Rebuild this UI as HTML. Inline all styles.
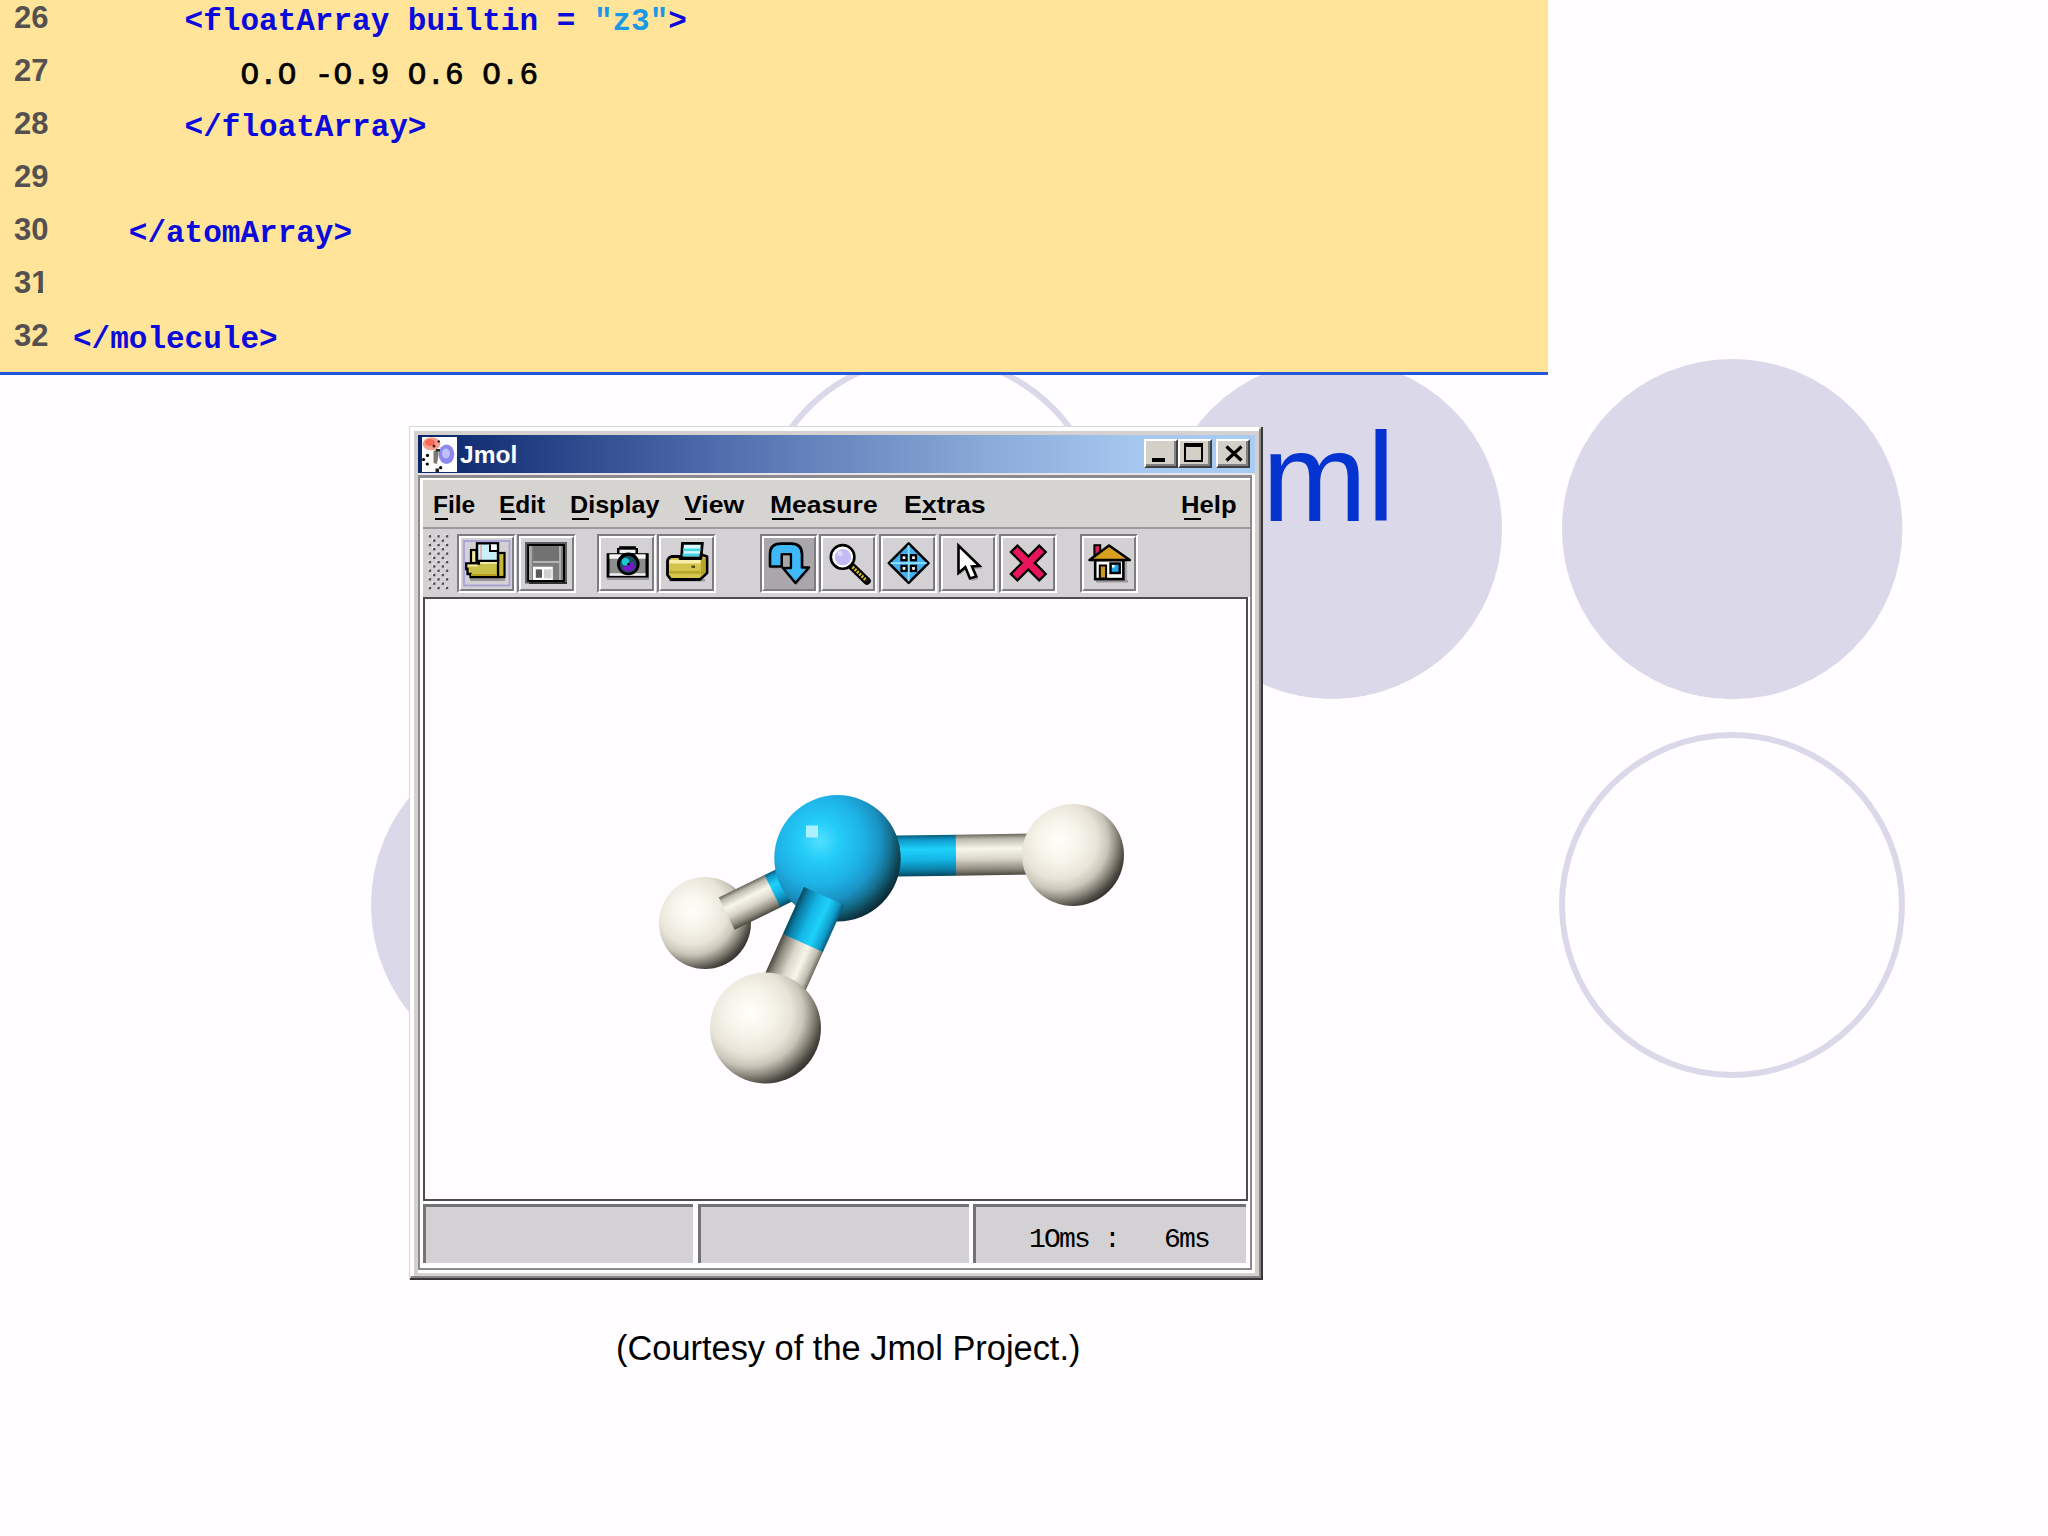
<!DOCTYPE html>
<html><head><meta charset="utf-8">
<style>
html,body{margin:0;padding:0;}
body{width:2048px;height:1536px;position:relative;overflow:hidden;background:#FFFDFF;font-family:"Liberation Sans",sans-serif;}
.abs{position:absolute;}
#bg{position:absolute;left:0;top:0;}
#code{position:absolute;left:0;top:0;width:1548px;height:372px;background:#FFE49A;}
#codeline{position:absolute;left:0;top:372px;width:1548px;height:3px;background:#2456DC;}
.ln{position:absolute;left:14px;margin-top:2px;font-family:"Liberation Sans",sans-serif;font-weight:bold;font-size:31px;color:#555050;line-height:1;}
.cd{position:absolute;font-family:"Liberation Mono",monospace;font-weight:bold;font-size:31px;color:#0A0ADC;line-height:1;white-space:pre;}
.title{position:absolute;left:1262px;top:415px;font-size:126px;color:#0433D0;line-height:1;}
.caption{position:absolute;left:616px;top:1331px;font-size:34.4px;color:#000;line-height:1;white-space:pre;}
</style></head>
<body>
<svg id="bg" width="2048" height="1536" viewBox="0 0 2048 1536">
  <circle cx="930.5" cy="529" r="172" fill="none" stroke="#DBD8EA" stroke-width="6"/>
  <circle cx="1332" cy="529" r="170" fill="#DBD8EA"/>
  <circle cx="1732.2" cy="529.1" r="170.2" fill="#DBD8EA"/>
  <circle cx="541" cy="905" r="170" fill="#DBD8EA"/>
  <circle cx="1732" cy="905" r="170" fill="none" stroke="#DBD8EA" stroke-width="6"/>
</svg>
<div class="title">ml</div>

<div id="code"></div>
<div id="codeline"></div>
<div class="ln" style="top:0px">26</div>
<div class="ln" style="top:53px">27</div>
<div class="ln" style="top:106px">28</div>
<div class="ln" style="top:159px">29</div>
<div class="ln" style="top:212px">30</div>
<div class="ln" style="top:265px">31</div>
<div class="abs" style="left:33px;top:288px;width:5.4px;height:6px;background:#FFE49A"></div><div class="abs" style="left:42.9px;top:288px;width:6px;height:6px;background:#FFE49A"></div>
<div class="ln" style="top:318px">32</div>
<div class="cd" style="left:73px;top:6px">      &lt;floatArray builtin = <span style="color:#1A98E8">"z3"</span>&gt;</div>
<div class="cd" style="left:73px;top:60px;color:#000;font-weight:normal;-webkit-text-stroke:0.7px #000">         O.O -O.9 O.6 O.6</div>
<div class="cd" style="left:73px;top:112px">      &lt;/floatArray&gt;</div>
<div class="cd" style="left:73px;top:218px">   &lt;/atomArray&gt;</div>
<div class="cd" style="left:73px;top:324px">&lt;/molecule&gt;</div>

<div class="caption">(Courtesy of the Jmol Project.)</div>


<!-- JMOL WINDOW -->
<div class="abs" style="left:409px;top:426px;width:854px;height:854px;background:#D4D1CE;"></div>
<div class="abs" style="left:410px;top:427px;width:4px;height:849px;background:#FFFFFF;"></div>
<div class="abs" style="left:410px;top:427px;width:849px;height:4px;background:#FFFFFF;"></div>
<div class="abs" style="left:409px;top:426px;width:1px;height:854px;background:#D8D8D8;"></div>
<div class="abs" style="left:409px;top:426px;width:854px;height:1px;background:#D8D8D8;"></div>
<div class="abs" style="left:1259px;top:429px;width:2px;height:849px;background:#858585;"></div>
<div class="abs" style="left:1261px;top:427px;width:2px;height:853px;background:#38363C;"></div>
<div class="abs" style="left:411px;top:1276px;width:850px;height:2px;background:#858585;"></div>
<div class="abs" style="left:410px;top:1278px;width:853px;height:2px;background:#38363C;"></div>
<!-- title bar -->
<div class="abs" style="left:418px;top:435px;width:837px;height:38px;background:linear-gradient(to right,#0A246A 0%,#1F3C80 12%,#4A68A8 33%,#6A88C0 50%,#8AAAD8 68%,#A6C8F0 86%,#A8CCF4 100%);"></div>
<div class="abs" style="left:418px;top:473px;width:837px;height:2px;background:#E6E4E6;"></div>
<!-- content pane etched border -->
<div class="abs" style="left:418px;top:475px;width:837px;height:798px;background:#FFFFFF;"></div>
<div class="abs" style="left:418px;top:475px;width:834px;height:795px;background:#8C8A8E;"></div>
<div class="abs" style="left:420px;top:478px;width:830px;height:790px;background:#FFFFFF;"></div>
<div class="abs" style="left:423px;top:480px;width:827px;height:784px;background:#D4D1D4;"></div>
<div class="abs" style="left:423px;top:480px;width:827px;height:47px;background:#D6D4D1;"></div>
<!-- menu separator -->
<div class="abs" style="left:423px;top:527px;width:827px;height:2px;background:#9C9A9E;"></div>
<!-- display -->
<div class="abs" style="left:423px;top:597px;width:827px;height:607px;background:#FFFFFF;"></div>
<div class="abs" style="left:423px;top:597px;width:821px;height:600px;background:#FFFDFF;border:2px solid #4E4C50;"></div>

<!-- molecule -->
<svg class="abs" style="left:600px;top:770px" width="560" height="340" viewBox="600 770 560 340">
  <defs>
    <radialGradient id="gN" cx="0.36" cy="0.36" r="0.72">
      <stop offset="0" stop-color="#50E0FF"/>
      <stop offset="0.22" stop-color="#24CCF8"/>
      <stop offset="0.48" stop-color="#1EB2E6"/>
      <stop offset="0.66" stop-color="#1A94C6"/>
      <stop offset="0.78" stop-color="#15708F"/>
      <stop offset="0.89" stop-color="#0E4252"/>
      <stop offset="1" stop-color="#081C24"/>
    </radialGradient>
    <radialGradient id="gH" cx="0.36" cy="0.36" r="0.72">
      <stop offset="0" stop-color="#FFFFFA"/>
      <stop offset="0.3" stop-color="#F6F3EA"/>
      <stop offset="0.52" stop-color="#E8E4D8"/>
      <stop offset="0.67" stop-color="#CAC6BA"/>
      <stop offset="0.79" stop-color="#8C887E"/>
      <stop offset="0.9" stop-color="#4C4A42"/>
      <stop offset="1" stop-color="#262420"/>
    </radialGradient>
    <linearGradient id="bW" x1="0" y1="0" x2="0" y2="1">
      <stop offset="0" stop-color="#6A685E"/>
      <stop offset="0.12" stop-color="#BEBCB0"/>
      <stop offset="0.35" stop-color="#F8F6EC"/>
      <stop offset="0.6" stop-color="#DAD6CA"/>
      <stop offset="0.85" stop-color="#8E8A7E"/>
      <stop offset="1" stop-color="#4A4840"/>
    </linearGradient>
    <linearGradient id="bB" x1="0" y1="0" x2="0" y2="1">
      <stop offset="0" stop-color="#0A5A78"/>
      <stop offset="0.12" stop-color="#109CCC"/>
      <stop offset="0.35" stop-color="#1ED2FA"/>
      <stop offset="0.6" stop-color="#14B6E6"/>
      <stop offset="0.85" stop-color="#0A7EA6"/>
      <stop offset="1" stop-color="#06485E"/>
    </linearGradient>
  </defs>
  <!-- H left -->
  <circle cx="705" cy="923" r="46" fill="url(#gH)"/>
  <!-- left bond: from (726.7,913.7) toward N, angle -26.2deg -->
  <g transform="translate(726.7 913.7) rotate(-26.2)">
    <rect x="0" y="-18" width="52" height="36" fill="url(#bW)"/>
    <rect x="51" y="-18" width="70" height="36" fill="url(#bB)"/>
  </g>
  <!-- right bond -->
  <g transform="translate(860 856.5) rotate(-0.8)">
    <rect x="0" y="-20.5" width="96.5" height="41" fill="url(#bB)"/>
    <rect x="96" y="-20.5" width="80" height="41" fill="url(#bW)"/>
  </g>
  <!-- N -->
  <circle cx="837.5" cy="858.3" r="63.2" fill="url(#gN)"/>
  <rect x="806" y="825.5" width="12" height="12" fill="#B8F4FF" opacity="0.9"/>
  <!-- bottom bond: from cap (824,896) toward H-bottom, angle: direction (-0.41,0.912) -->
  <g transform="translate(824 896) rotate(114.2)">
    <rect x="0" y="-22" width="52" height="44" fill="url(#bB)"/>
    <rect x="51.5" y="-22" width="70" height="44" fill="url(#bW)"/>
  </g>
  <!-- H right -->
  <circle cx="1073" cy="855" r="51" fill="url(#gH)"/>
  <!-- H bottom -->
  <circle cx="765.5" cy="1028" r="55.5" fill="url(#gH)"/>
</svg>

<!-- menu -->
<style>
.mn{position:absolute;top:493px;font-family:"Liberation Sans",sans-serif;font-weight:bold;font-size:24.5px;line-height:1;color:#000;white-space:pre;transform-origin:0 0;}
.ul{position:absolute;top:518px;height:2px;background:#000;}
</style>
<div class="mn" style="left:433px;">File</div>
<div class="mn" style="left:499px;">Edit</div>
<div class="mn" style="left:569.5px;transform:scaleX(1.026)">Display</div>
<div class="mn" style="left:683.5px;transform:scaleX(1.087)">View</div>
<div class="mn" style="left:770px;transform:scaleX(1.083)">Measure</div>
<div class="mn" style="left:903.5px;transform:scaleX(1.089)">Extras</div>
<div class="mn" style="left:1181.3px;transform:scaleX(1.046)">Help</div>
<div class="ul" style="left:435px;width:13px"></div>
<div class="ul" style="left:501px;width:15px"></div>
<div class="ul" style="left:572px;width:17px"></div>
<div class="ul" style="left:685px;width:16px"></div>
<div class="ul" style="left:772px;width:22px"></div>
<div class="ul" style="left:922px;width:14px"></div>
<div class="ul" style="left:1184px;width:17px"></div>
<!-- title text -->
<div class="abs" style="left:460px;top:443px;font-family:'Liberation Sans',sans-serif;font-weight:bold;font-size:24.5px;line-height:1;color:#FFFFFF;white-space:pre;">Jmol</div>
<!-- title bar icon -->
<svg class="abs" style="left:422px;top:437px" width="35" height="35" viewBox="0 0 35 35">
  <rect x="0" y="0" width="35" height="35" fill="#FFFFFF"/>
  <ellipse cx="9.5" cy="6.8" rx="9" ry="6.5" fill="#F4A090"/>
  <ellipse cx="8" cy="5.5" rx="5" ry="3.5" fill="#F86858"/>
  <ellipse cx="24.5" cy="17.2" rx="7.8" ry="9.8" fill="#8C88F0"/>
  <ellipse cx="24" cy="16.5" rx="4" ry="5" fill="#C0C0FF"/>
  <path d="M11.5 14 L16.5 12 L16.5 18 L15 27 L11.5 26 Z" fill="#7A7A70"/>
  <circle cx="5.5" cy="18.4" r="1.6" fill="#000"/>
  <circle cx="1.6" cy="22.5" r="1.6" fill="#000"/>
  <circle cx="5.3" cy="27" r="1.6" fill="#000"/>
  <circle cx="18.6" cy="30.7" r="1.6" fill="#000"/>
  <rect x="13.5" y="31.5" width="3.5" height="3.5" fill="#202020"/>
  <circle cx="12" cy="9" r="1.5" fill="#501818"/>
  <circle cx="16.7" cy="4.5" r="1.2" fill="#301010"/>
  <rect x="14" y="12" width="4" height="2.5" fill="#203020"/>
</svg>
<!-- title buttons -->
<style>
.tb{position:absolute;top:439px;width:34px;height:29px;box-sizing:border-box;background:#D4D0C8;border-top:2px solid #FFFFFF;border-left:2px solid #FFFFFF;border-right:2px solid #404040;border-bottom:2px solid #404040;}
.tbi{position:absolute;left:0;top:0;right:0;bottom:0;border-right:2px solid #808080;border-bottom:2px solid #808080;}
.btn{position:absolute;top:534px;width:59px;height:59px;box-sizing:border-box;border-top:2px solid #7E7C80;border-left:2px solid #7E7C80;border-right:2px solid #FFFFFF;border-bottom:2px solid #FFFFFF;}
.btni{position:absolute;left:0;top:0;right:0;bottom:0;border-top:2px solid #FFFFFF;border-left:2px solid #FFFFFF;border-right:2px solid #7E7C80;border-bottom:2px solid #7E7C80;}
.btn svg{position:absolute;left:-2px;top:-2px;}
</style>
<div class="tb" style="left:1144px"><div class="tbi"></div><div class="abs" style="left:6px;top:17px;width:13px;height:4px;background:#000"></div></div>
<div class="tb" style="left:1178px"><div class="tbi"></div><div class="abs" style="left:4px;top:2px;width:19px;height:19px;box-sizing:border-box;border:2px solid #000;border-top-width:4px;"></div></div>
<div class="tb" style="left:1216px;width:34px"><div class="tbi"></div>
 <svg class="abs" style="left:7px;top:4px" width="18" height="17" viewBox="0 0 18 17"><path d="M1.5 1.5 L16.5 15.5 M16.5 1.5 L1.5 15.5" stroke="#000" stroke-width="3.2"/></svg></div>

<!-- toolbar grip -->
<svg class="abs" style="left:426px;top:532px" width="24" height="62" viewBox="0 0 24 62"><rect x="2.0" y="2.5" width="2.2" height="2.2" fill="#FFFFFF"/><rect x="2.7" y="3.1" width="2.4" height="2.4" fill="#504E52"/><rect x="10.6" y="2.5" width="2.2" height="2.2" fill="#FFFFFF"/><rect x="11.3" y="3.1" width="2.4" height="2.4" fill="#504E52"/><rect x="19.1" y="2.5" width="2.2" height="2.2" fill="#FFFFFF"/><rect x="19.8" y="3.1" width="2.4" height="2.4" fill="#504E52"/><rect x="2.0" y="11.1" width="2.2" height="2.2" fill="#FFFFFF"/><rect x="2.7" y="11.8" width="2.4" height="2.4" fill="#504E52"/><rect x="10.6" y="11.1" width="2.2" height="2.2" fill="#FFFFFF"/><rect x="11.3" y="11.8" width="2.4" height="2.4" fill="#504E52"/><rect x="19.1" y="11.1" width="2.2" height="2.2" fill="#FFFFFF"/><rect x="19.8" y="11.8" width="2.4" height="2.4" fill="#504E52"/><rect x="2.0" y="19.7" width="2.2" height="2.2" fill="#FFFFFF"/><rect x="2.7" y="20.4" width="2.4" height="2.4" fill="#504E52"/><rect x="10.6" y="19.7" width="2.2" height="2.2" fill="#FFFFFF"/><rect x="11.3" y="20.4" width="2.4" height="2.4" fill="#504E52"/><rect x="19.1" y="19.7" width="2.2" height="2.2" fill="#FFFFFF"/><rect x="19.8" y="20.4" width="2.4" height="2.4" fill="#504E52"/><rect x="2.0" y="28.2" width="2.2" height="2.2" fill="#FFFFFF"/><rect x="2.7" y="28.9" width="2.4" height="2.4" fill="#504E52"/><rect x="10.6" y="28.2" width="2.2" height="2.2" fill="#FFFFFF"/><rect x="11.3" y="28.9" width="2.4" height="2.4" fill="#504E52"/><rect x="19.1" y="28.2" width="2.2" height="2.2" fill="#FFFFFF"/><rect x="19.8" y="28.9" width="2.4" height="2.4" fill="#504E52"/><rect x="2.0" y="36.8" width="2.2" height="2.2" fill="#FFFFFF"/><rect x="2.7" y="37.5" width="2.4" height="2.4" fill="#504E52"/><rect x="10.6" y="36.8" width="2.2" height="2.2" fill="#FFFFFF"/><rect x="11.3" y="37.5" width="2.4" height="2.4" fill="#504E52"/><rect x="19.1" y="36.8" width="2.2" height="2.2" fill="#FFFFFF"/><rect x="19.8" y="37.5" width="2.4" height="2.4" fill="#504E52"/><rect x="2.0" y="45.5" width="2.2" height="2.2" fill="#FFFFFF"/><rect x="2.7" y="46.1" width="2.4" height="2.4" fill="#504E52"/><rect x="10.6" y="45.5" width="2.2" height="2.2" fill="#FFFFFF"/><rect x="11.3" y="46.1" width="2.4" height="2.4" fill="#504E52"/><rect x="19.1" y="45.5" width="2.2" height="2.2" fill="#FFFFFF"/><rect x="19.8" y="46.1" width="2.4" height="2.4" fill="#504E52"/><rect x="2.0" y="54.1" width="2.2" height="2.2" fill="#FFFFFF"/><rect x="2.7" y="54.8" width="2.4" height="2.4" fill="#504E52"/><rect x="10.6" y="54.1" width="2.2" height="2.2" fill="#FFFFFF"/><rect x="11.3" y="54.8" width="2.4" height="2.4" fill="#504E52"/><rect x="19.1" y="54.1" width="2.2" height="2.2" fill="#FFFFFF"/><rect x="19.8" y="54.8" width="2.4" height="2.4" fill="#504E52"/><rect x="6.3" y="6.7" width="2.2" height="2.2" fill="#FFFFFF"/><rect x="7.0" y="7.4" width="2.4" height="2.4" fill="#504E52"/><rect x="14.9" y="6.7" width="2.2" height="2.2" fill="#FFFFFF"/><rect x="15.6" y="7.4" width="2.4" height="2.4" fill="#504E52"/><rect x="6.3" y="15.3" width="2.2" height="2.2" fill="#FFFFFF"/><rect x="7.0" y="16.0" width="2.4" height="2.4" fill="#504E52"/><rect x="14.9" y="15.3" width="2.2" height="2.2" fill="#FFFFFF"/><rect x="15.6" y="16.0" width="2.4" height="2.4" fill="#504E52"/><rect x="6.3" y="23.9" width="2.2" height="2.2" fill="#FFFFFF"/><rect x="7.0" y="24.6" width="2.4" height="2.4" fill="#504E52"/><rect x="14.9" y="23.9" width="2.2" height="2.2" fill="#FFFFFF"/><rect x="15.6" y="24.6" width="2.4" height="2.4" fill="#504E52"/><rect x="6.3" y="32.5" width="2.2" height="2.2" fill="#FFFFFF"/><rect x="7.0" y="33.2" width="2.4" height="2.4" fill="#504E52"/><rect x="14.9" y="32.5" width="2.2" height="2.2" fill="#FFFFFF"/><rect x="15.6" y="33.2" width="2.4" height="2.4" fill="#504E52"/><rect x="6.3" y="41.1" width="2.2" height="2.2" fill="#FFFFFF"/><rect x="7.0" y="41.8" width="2.4" height="2.4" fill="#504E52"/><rect x="14.9" y="41.1" width="2.2" height="2.2" fill="#FFFFFF"/><rect x="15.6" y="41.8" width="2.4" height="2.4" fill="#504E52"/><rect x="6.3" y="49.7" width="2.2" height="2.2" fill="#FFFFFF"/><rect x="7.0" y="50.4" width="2.4" height="2.4" fill="#504E52"/><rect x="14.9" y="49.7" width="2.2" height="2.2" fill="#FFFFFF"/><rect x="15.6" y="50.4" width="2.4" height="2.4" fill="#504E52"/></svg>

<!-- toolbar buttons -->
<!-- 1 open -->
<div class="btn" style="left:457px"><div class="btni"></div>
<svg width="59" height="59" viewBox="0 0 59 59">
  <rect x="7" y="7" width="45.5" height="44.5" fill="none" stroke="#A8A0D8" stroke-width="1.8"/>
  <rect x="13" y="44" width="35" height="3" fill="#6A686C" opacity="0.55"/>
  <rect x="14" y="16" width="5.5" height="13" fill="#F0E8A0" stroke="#000" stroke-width="2.2"/>
  <rect x="41" y="19" width="6.5" height="24" fill="#C8B838" stroke="#000" stroke-width="2.2"/>
  <rect x="20" y="9.3" width="21" height="18" fill="#C8F0F8" stroke="#000" stroke-width="2.4"/>
  <path d="M33 10.5 L33 17 L40 17" fill="none" stroke="#000" stroke-width="2"/>
  <rect x="34" y="10.5" width="5.5" height="5.5" fill="#FFFFFF"/>
  <line x1="24" y1="11" x2="24" y2="26" stroke="#F0A0A8" stroke-width="1.4"/>
  <path d="M9.2 29.5 L22 29.5 L22 27 L41 27 L41 43 L13.5 43 L13.5 40 L10.5 40 L10.5 35 L9.2 35 Z" fill="#C8C048" stroke="#000" stroke-width="2.3" stroke-linejoin="miter"/>
  <rect x="10.5" y="30.5" width="10" height="2" fill="#F4ECA8"/>
  <rect x="23" y="28" width="17" height="1.8" fill="#F4ECA8"/>
  <rect x="14" y="40" width="26" height="2" fill="#B8A020"/>
</svg></div>
<!-- 2 save -->
<div class="btn" style="left:517px"><div class="btni"></div>
<svg width="59" height="59" viewBox="0 0 59 59">
  <rect x="8" y="8" width="42" height="41.5" fill="#5E5E60"/>
  <rect x="10.2" y="10" width="37.8" height="38" fill="#000"/>
  <rect x="12" y="12" width="34" height="34" fill="#7C7C7C"/>
  <rect x="12" y="12" width="3" height="34" fill="#A8A8A8"/>
  <rect x="42" y="12" width="2" height="34" fill="#B0B0B0"/>
  <rect x="16.5" y="12.3" width="25.5" height="14.2" fill="#727272"/>
  <rect x="16" y="27" width="27" height="2" fill="#B4B4B4"/>
  <rect x="16" y="32.7" width="19.8" height="13.3" fill="#FFFFFF"/>
  <rect x="18.8" y="35.4" width="6.2" height="8.4" fill="#585858"/>
  <rect x="27" y="35.4" width="7.6" height="9" fill="#D0D0D0"/>
  <rect x="12" y="48" width="38" height="2" fill="#303030"/>
</svg></div>
<!-- 3 camera -->
<div class="btn" style="left:597px"><div class="btni"></div>
<svg width="59" height="59" viewBox="0 0 59 59">
  <rect x="10" y="43.5" width="42" height="2.5" fill="#6A686C" opacity="0.5"/>
  <rect x="22.1" y="12.2" width="16.8" height="9" fill="#F0F0F0"/>
  <rect x="22.1" y="12.2" width="16.8" height="3.5" fill="#000"/>
  <rect x="20" y="14" width="2.5" height="7" fill="#000"/>
  <rect x="38.5" y="14" width="2.5" height="7" fill="#000"/>
  <rect x="9.6" y="19.2" width="42.1" height="24.4" fill="#000"/>
  <rect x="12.5" y="20.4" width="36" height="21" fill="#8C8C8C"/>
  <rect x="12.5" y="20.4" width="36" height="4.3" fill="#F4F4F4"/>
  <rect x="12.5" y="39.3" width="36" height="2.5" fill="#F0F0F0"/>
  <circle cx="31.3" cy="29.9" r="11.3" fill="#000"/>
  <circle cx="31.3" cy="30.4" r="8.3" fill="#1C5068"/>
  <path d="M24.5 34 A8 8 0 0 0 38 33 L36 28 Z" fill="#7818C8"/>
  <circle cx="28.5" cy="27.8" r="3.8" fill="#20C8D0"/>
  <circle cx="31.5" cy="30" r="1.3" fill="#000"/>
</svg></div>
<!-- 4 printer -->
<div class="btn" style="left:657px"><div class="btni"></div>
<svg width="59" height="59" viewBox="0 0 59 59">
  <rect x="12" y="45" width="36" height="2.5" fill="#6A686C" opacity="0.5"/>
  <path d="M25.5 9.3 L45.3 9.3 L44 24 L24.5 24 Z" fill="#D8F8FC" stroke="#000" stroke-width="2.8"/>
  <rect x="26" y="14.5" width="17.5" height="2.6" fill="#40D8E8"/>
  <rect x="25.5" y="19.5" width="17.5" height="2.6" fill="#40D8E8"/>
  <path d="M10.5 27.5 Q10.5 24 14.5 22.5 L23 22.5 L23 24.5 L44 24.5 L44 20.5 L50 22.5 L50 39 L43 45.5 L14 45.5 L10.5 41 Z" fill="#D4C44C" stroke="#000" stroke-width="2.8" stroke-linejoin="round"/>
  <rect x="12.5" y="26" width="31" height="3.5" fill="#F6EEA8"/>
  <rect x="12.5" y="37" width="31" height="2.6" fill="#B8A428"/>
  <path d="M44 26 L48.5 24.5 L48.5 38.5 L44 43 Z" fill="#B8A42C"/>
  <rect x="34.5" y="31.5" width="3.5" height="2.5" fill="#505020"/>
</svg></div>
<!-- 5 rotate (pressed) -->
<div class="btn" style="left:760px;width:58px"><div class="btni" style="background:#A9A7AB"></div>
<svg width="58" height="59" viewBox="0 0 58 59">
  <path d="M12 35 L12 22 Q12 11.6 23 11.6 L33 11.6 Q44 11.6 44 22.5 L44 35.5 L51 35.5 L37.5 51 L25 36 L32.8 36 L32.8 22.3 L23.8 22.3 L23.8 34.5 Z" fill="#909090" opacity="0.55"/>
  <path d="M10 32.5 L10 20 Q10 9.6 21 9.6 L31 9.6 Q42 9.6 42 20.5 L42 33.5 L49 33.5 L35.5 49 L23 34 L30.8 34 L30.8 20.3 L21.8 20.3 L21.8 32.5 Z" fill="#40B8F8" stroke="#000" stroke-width="2.6" stroke-linejoin="round"/>
  <rect x="23" y="21.6" width="6.6" height="10.8" fill="#A8A8A4"/>
</svg></div>
<!-- 6 zoom -->
<div class="btn" style="left:819px;width:58px"><div class="btni"></div>
<svg width="58" height="59" viewBox="0 0 58 59">
  <line x1="33" y1="32.5" x2="48" y2="47" stroke="#000" stroke-width="7.5" stroke-linecap="round"/>
  <line x1="33.5" y1="33" x2="47.5" y2="46.5" stroke="#D8C030" stroke-width="3.2" stroke-linecap="butt" stroke-dasharray="2 1.2"/>
  <circle cx="23.6" cy="22.9" r="11.8" fill="#FFFFFF" stroke="#000" stroke-width="2.6"/>
  <circle cx="24" cy="23.3" r="8.2" fill="#C4BAF6"/>
  <circle cx="21" cy="19.5" r="2.5" fill="#E0DAFF"/>
</svg></div>
<!-- 7 move -->
<div class="btn" style="left:879px;width:58px"><div class="btni"></div>
<svg width="58" height="59" viewBox="0 0 58 59">
  <path d="M29.65 9.3 L49.5 29.1 L29.65 48.9 L9.8 29.1 Z" fill="#44B0F0" stroke="#000" stroke-width="2.6" stroke-linejoin="round"/>
  <path d="M29.65 11 L29.65 47.2 M11.5 29.1 L47.8 29.1" stroke="#90E0FF" stroke-width="1.8"/>
  <rect x="22.5" y="21.2" width="5" height="5" fill="#FFF" stroke="#000" stroke-width="2.3"/>
  <rect x="32" y="21.2" width="5" height="5" fill="#FFF" stroke="#000" stroke-width="2.3"/>
  <rect x="22.5" y="31.9" width="5" height="5" fill="#FFF" stroke="#000" stroke-width="2.3"/>
  <rect x="32" y="31.9" width="5" height="5" fill="#FFF" stroke="#000" stroke-width="2.3"/>
</svg></div>
<!-- 8 pointer -->
<div class="btn" style="left:939px;width:58px"><div class="btni"></div>
<svg width="58" height="59" viewBox="0 0 58 59">
  <path d="M21 13 L21 41 L28 35 L33 47 L39.5 45.5 L35 35 L43 34.5 Z" fill="#8C8A8E" opacity="0.6"/>
  <path d="M19.5 11.5 L19.5 39 L26.3 33.2 L31 44.5 L37.3 42.5 L33 32.5 L40.5 32 Z" fill="#FFFFFF" stroke="#000" stroke-width="2.6" stroke-linejoin="miter"/>
</svg></div>
<!-- 9 delete X -->
<div class="btn" style="left:999px;width:58px"><div class="btni"></div>
<svg width="58" height="59" viewBox="0 0 58 59">
  <path d="M18.4 18.1 L40.2 39.9 M40.2 18.1 L18.4 39.9" stroke="#000" stroke-width="11.5" stroke-linecap="square"/>
  <path d="M18.4 18.1 L40.2 39.9 M40.2 18.1 L18.4 39.9" stroke="#E8145C" stroke-width="7" stroke-linecap="square"/>
</svg></div>
<!-- 10 home -->
<div class="btn" style="left:1080px;width:58px"><div class="btni"></div>
<svg width="58" height="59" viewBox="0 0 58 59">
  <rect x="16" y="46" width="32" height="2.5" fill="#6A686C" opacity="0.55"/>
  <rect x="44.6" y="27" width="2.5" height="19" fill="#8A888C" opacity="0.6"/>
  <rect x="14.4" y="11.2" width="5.8" height="10" fill="#D82058" stroke="#000" stroke-width="2"/>
  <rect x="15.2" y="26.1" width="28.2" height="19" fill="#F8F8F8" stroke="#000" stroke-width="2.6"/>
  <path d="M9.5 26 L29 11.5 L49.8 26 Z" fill="#D8A020" stroke="#000" stroke-width="2.6" stroke-linejoin="round"/>
  <rect x="19.8" y="31.5" width="6.3" height="13" fill="#C89820" stroke="#000" stroke-width="2"/>
  <rect x="30.5" y="29.5" width="9.2" height="9.5" fill="#20A8E8" stroke="#000" stroke-width="2.4"/>
  <rect x="32" y="31" width="2.5" height="2.5" fill="#FFF"/>
</svg></div>

<!-- status cells -->
<div class="abs" style="left:423px;top:1204px;width:275px;height:63px;background:#FFFFFF;"></div>
<div class="abs" style="left:423px;top:1204px;width:270px;height:59px;background:#D4D1D4;border-left:3px solid #747276;border-top:3px solid #747276;box-sizing:border-box;"></div>
<div class="abs" style="left:698px;top:1204px;width:275px;height:63px;background:#FFFFFF;"></div>
<div class="abs" style="left:698px;top:1204px;width:271px;height:59px;background:#D4D1D4;border-left:3px solid #747276;border-top:3px solid #747276;box-sizing:border-box;"></div>
<div class="abs" style="left:973px;top:1204px;width:277px;height:63px;background:#FFFFFF;"></div>
<div class="abs" style="left:973px;top:1204px;width:273px;height:59px;background:#D4D1D4;border-left:3px solid #747276;border-top:3px solid #747276;box-sizing:border-box;"></div>
<div class="abs" style="left:1029px;top:1226px;font-family:'Liberation Mono',monospace;font-size:28px;letter-spacing:-1.8px;line-height:1;color:#000;white-space:pre;">1Oms :   6ms</div>

</body></html>
